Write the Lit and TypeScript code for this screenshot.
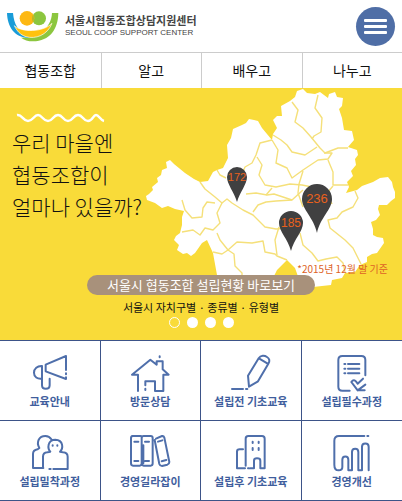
import { LitElement, html, svg, css } from "lit";
import { customElement, state } from "lit/decorators.js";

const NAV = ["협동조합", "알고", "배우고", "나누고"];

const OUTLINE =
  "M146 196L149 194L153 190L152 187L158 182L157 178L161 175L162 170L167 168L166 162L170 160L174 164L185 173L194 179L200 182L208 181L213 172L217 170L223 168L228 158L227 145L231 138L233 129L242 125L246 123L249 119L254 120L258 121L262 128L272 140L273 134L277 128L273 120L277 116L282 116L281 106L290 101L295 97L297 91L303 89L307 93L315 94L320 92L328 98L329 94L335 92L337 97L343 98L342 106L339 109L342 118L344 130L352 131L354 140L348 147L357 150L358 155L355 159L356 165L351 171L353 176L347 182L349 187L346 193L357 190L362 186L373 182L380 178L388 177L392 182L393 187L395 192L395 198L391 201L387 205L379 205L378 209L380 215L376 220L371 222L373 229L373 235L377 237L383 238L384 243L377 253L372 254L367 257L367 262L360 265L355 272L345 273L342 278L332 280L331 285L313 287L300 282L295 268L287 260L277 270L270 284L230 284L217 275L213 253L207 240L202 243L195 253L191 256L187 253L183 254L177 250L179 245L174 240L176 236L180 233L182 225L182 217L184 211L175 209L168 206L162 208L155 203L147 200Z";

const BOUNDARIES = [
  "M200 182L205 189L215 197L222 203L217 213L220 223L213 230L205 228L200 235L193 230L182 232",
  "M182 200L185 210L192 218L202 217L203 208L207 202L215 203",
  "M222 203L227 199L232 203L243 210L253 215L265 227L276 229L288 228",
  "M253 212L258 205L266 202L276 201L292 200L303 190",
  "M217 233L220 240L228 250L237 242L252 243L263 241L265 252L275 254L277 256L287 260",
  "M213 252L222 254L228 250L234 254L235 266L242 273L242 284",
  "M217 170L220 175L226 178",
  "M272 140L260 143L256 155L252 163L245 167L242 174",
  "M257 157L262 165L259 175L265 185L276 187L290 184L302 185L312 187",
  "M246 194L256 193L267 195L274 194L292 200",
  "M266 195L272 188",
  "M292 102L298 110L295 122L303 128L311 137L320 148L325 153L338 148L348 148",
  "M318 95L315 108L322 118L321 132L314 136L312 139",
  "M273 135L281 140L287 145L292 152L305 155L317 147",
  "M272 140L278 150L276 163L287 168L292 178L303 170L318 160L328 159L332 153L324 153",
  "M328 160L333 172L333 185L348 185",
  "M333 186L327 193L332 204",
  "M303 171L299 184L298 193L303 207",
  "M355 191L358 198L353 207L342 212L337 218L328 220L330 228L345 240L353 248L358 258L361 264",
  "M300 233L303 245L312 253L318 261L326 259L337 257L343 263L345 272",
  "M279 227L275 240L277 255",
];

interface Pin {
  x: number;
  y: number;
  r: number;
  tip: number;
  size: number;
  count: number;
}

const PINS: Pin[] = [
  { x: 237, y: 177, r: 10, tip: 202, size: 11, count: 172 },
  { x: 317, y: 199, r: 15, tip: 233, size: 13, count: 236 },
  { x: 291, y: 223, r: 12, tip: 251, size: 12, count: 185 },
];

const MENU = [
  {
    label: "교육안내",
    box: "90 48 120 108",
    art: svg`<path d="M137 80L198 54V96M137 80V100L198 123V118M126 84C112 83 102 92 102 104C102 117 112 124 126 122V84M126 122V142C126 156 149 156 149 142V122"/><path d="M198 106V109"/>`,
  },
  {
    label: "방문상담",
    box: "390 48 120 108",
    art: svg`<path d="M414 159V110H396L451 65L470 80V70H488V94L506 110H490V159H465V130H436V142M436 152V156M479 55V58"/>`,
  },
  {
    label: "설립전 기초교육",
    box: "93 48 120 108",
    art: svg`<path d="M96 153H129M138 153H142M144 113L176 61C182 51 194 52 201 57C209 62 210 69 205 77L174 130L147 146ZM178 62L203 77"/>`,
  },
  {
    label: "설립필수과정",
    box: "397 48 120 108",
    art: svg`<path d="M497 112V66Q497 54 485 54H428Q416 54 416 66V146Q416 158 428 158H450M434 78H437M445 78H479M434 92H437M445 92H479M434 106H437M445 106H479M455 132C462 122 468 128 474 137L490 122M455 132L474 157L497 140M474 157H495"/>`,
  },
  {
    label: "설립밀착과정",
    box: "90 48 120 108",
    art: svg`<path d="M130 150H99V108Q99 96 113 94L118 90C108 72 117 54 136 54Q148 54 154 64M160 153H203V116Q203 104 189 103L180 101C190 92 191 66 166 65C142 65 142 92 151 101L142 103Q129 104 129 116V150M148 153H152"/><path d="M158 82V83M172 82V83"/>`,
  },
  {
    label: "경영길라잡이",
    box: "390 48 120 108",
    art: svg`<path d="M396 54H423Q425 54 425 60V136Q425 143 419 143H399Q393 143 393 136V60Q393 54 399 54M425 60Q425 54 431 54H452Q458 54 458 60V136Q458 143 452 143H431Q425 143 425 136M468 62L486 54Q491 53 493 59L508 132Q508 138 502 140L486 144Q480 144 478 138L464 66M403 71H415M403 129H415M435 71H447M435 129H447M474 71L487 67M485 130L499 126M430 82V136"/>`,
  },
  {
    label: "설립후 기초교육",
    box: "93 48 120 108",
    art: svg`<path d="M135 151H111V101Q111 94 119 94H129M137 143V62Q137 54 145 54H186Q194 54 194 62V151H181V128Q181 121 171 121Q162 121 162 128V151H151M144 151H147M158 71V75M176 71V75M158 90V96M176 90V96"/>`,
  },
  {
    label: "경영개선",
    box: "397 48 120 108",
    art: svg`<path d="M494 54H418Q404 54 404 68V140Q404 157 417 157Q428 157 428 147V125C428 112 446 112 446 125V157H457V102C457 89 476 89 476 102V157H487V86C487 73 507 73 507 86V157M476 157H487M503 54H506"/>`,
  },
];

@customElement("app-root")
export class AppRoot extends LitElement {
  @state() private slide = 0;

  static styles = css`
    :host {
      display: block;
      background: #fff;
      color: #111;
      font-family: "Noto Sans CJK KR", "Noto Sans", sans-serif;
    }
    a {
      color: inherit;
      text-decoration: none;
    }
    button {
      padding: 0;
      border: 0;
      cursor: pointer;
    }
    .header {
      display: flex;
      justify-content: space-between;
      align-items: center;
      height: 52px;
      box-sizing: border-box;
      padding: 0 7px;
    }
    .brand {
      display: flex;
      align-items: center;
      gap: 6px;
    }
    .logo {
      width: 52px;
      height: 32px;
    }
    .names {
      display: flex;
      flex-direction: column;
    }
    .name {
      font-size: 11px;
      line-height: 14px;
      font-weight: 700;
      color: #444;
    }
    .latin {
      font-family: "Liberation Sans", Arial, sans-serif;
      font-size: 8px;
      line-height: 12px;
      color: #444;
    }
    .burger {
      display: flex;
      flex-direction: column;
      align-items: center;
      justify-content: center;
      gap: 3px;
      width: 39px;
      height: 39px;
      border-radius: 50%;
      background: #4f6ea6;
    }
    .bar {
      width: 23px;
      height: 3px;
      border-radius: 1px;
      background: #fff;
    }
    .nav {
      display: grid;
      grid-template-columns: repeat(4, 1fr);
      border-top: 1px solid #ccc;
    }
    .tab {
      font-size: 14px;
      line-height: 35px;
      text-align: center;
    }
    .tab + .tab {
      border-left: 1px solid #ccc;
    }
    .hero {
      position: relative;
      display: flex;
      flex-direction: column;
      align-items: center;
      min-height: 252px;
      box-sizing: border-box;
      padding: 24px 12px 12px;
      background: #f9db39;
    }
    .map {
      position: absolute;
      top: 0;
      right: 0;
      width: 260px;
      height: 252px;
    }
    .land {
      fill: #fff;
    }
    .boundary {
      fill: none;
      stroke: #f5e07a;
      stroke-width: 1.4;
      stroke-linejoin: round;
    }
    .pin {
      fill: #404041;
    }
    .count {
      fill: #e8601c;
      font-family: "Liberation Sans", Arial, sans-serif;
      text-anchor: middle;
    }
    .wave {
      align-self: flex-start;
      width: 96px;
      height: 12px;
      fill: none;
      stroke: #fff;
      stroke-width: 2.5;
    }
    .title {
      position: relative;
      align-self: flex-start;
      margin: 2px 0 0;
      font-size: 21px;
      line-height: 32px;
      font-weight: 300;
    }
    .note {
      position: relative;
      align-self: flex-end;
      margin: auto 2px 0 0;
      font-size: 10px;
      line-height: 12px;
      color: #dd6226;
    }
    .pill {
      position: relative;
      padding: 0 20px;
      border-radius: 10px;
      background: #a8917b;
      color: #fff;
      font-size: 13px;
      line-height: 20px;
    }
    .scope {
      margin: 4px 0 2px;
      font-size: 11px;
      line-height: 16px;
    }
    .dots {
      display: flex;
      gap: 7px;
    }
    .dot {
      width: 11px;
      height: 11px;
      box-sizing: border-box;
      border-radius: 50%;
      background: #fff;
    }
    .dot.current {
      border: 1px solid #fff;
      background: transparent;
    }
    .menu {
      display: grid;
      grid-template-columns: repeat(4, 1fr);
      border-bottom: 1px solid #3d5488;
    }
    .tile {
      display: flex;
      flex-direction: column;
      align-items: center;
      gap: 3px;
      height: 80px;
      box-sizing: border-box;
      padding-top: 13px;
      border-top: 1px solid #3d5488;
      border-right: 1px solid #3d5488;
      color: #3f5e9d;
      font-size: 11px;
      line-height: 16px;
      font-weight: 700;
      white-space: nowrap;
    }
    .tile:nth-child(4n) {
      border-right: 0;
    }
    .icon {
      width: 40px;
      height: 36px;
      overflow: visible;
      fill: none;
      stroke: #4f6fab;
      stroke-width: 6;
      stroke-linecap: round;
      stroke-linejoin: round;
    }
  `;

  private renderPin(p: Pin) {
    const { x, y, r, tip } = p;
    return svg`
      <path class="pin" d="M${x} ${tip}C${x - 3} ${tip - r} ${x - r} ${y + r * 0.7} ${x - r} ${y}A${r} ${r} 0 0 1 ${x + r} ${y}C${x + r} ${y + r * 0.7} ${x + 3} ${tip - r} ${x} ${tip}Z"></path>
      <text class="count" x=${x} y=${y + 4} font-size=${p.size}>${p.count}</text>`;
  }

  render() {
    return html`
      <header class="header">
        <a class="brand" href="#">
          <svg class="logo" viewBox="21 30 156 96" aria-hidden="true">
            <path fill="#8cc63f" d="M156 39H175C174 88 150 123 99 124C84 124 72 120 63 113C112 114 154 86 156 39Z" />
            <path fill="#1a9cd8" d="M21 39H39C42 72 54 96 88 113C45 115 22 81 21 39Z" />
            <path fill="#ffc20e" stroke="#fff" stroke-width="2" d="M43 77C64 97 128 98 156 70C142 106 106 118 78 110C60 104 51 93 43 77Z" />
            <circle cx="117" cy="55" r="21" fill="#8cc63f" />
            <circle cx="81" cy="55" r="22" fill="#fdb813" />
            <path fill="#b5b82a" d="M99 44Q105 55 99 67Q93 55 99 44Z" />
          </svg>
          <span class="names">
            <span class="name">서울시협동조합상담지원센터</span>
            <span class="latin">SEOUL COOP SUPPORT CENTER</span>
          </span>
        </a>
        <button class="burger" aria-label="메뉴">
          <span class="bar"></span><span class="bar"></span><span class="bar"></span>
        </button>
      </header>
      <nav class="nav">
        ${NAV.map((label) => html`<a class="tab" href="#">${label}</a>`)}
      </nav>
      <section class="hero">
        <svg class="map" viewBox="142 88 260 252" aria-hidden="true">
          <path class="land" d=${OUTLINE}></path>
          ${BOUNDARIES.map((d) => svg`<path class="boundary" d=${d}></path>`)}
          ${PINS.map((p) => this.renderPin(p))}
        </svg>
        <svg class="wave" viewBox="12 112 96 12" aria-hidden="true">
          <path d="M17 115C22 114 23 121 28 121S34 115 38 115S43 121 48 121S53 115 58 115S63 121 68 121S73 115 78 115S83 121 88 121S93 115 96 115S100 120 104 121" />
        </svg>
        <h1 class="title">우리 마을엔<br />협동조합이<br />얼마나 있을까?</h1>
        <p class="note">*2015년 12월 말 기준</p>
        <a class="pill" href="#">서울시 협동조합 설립현황 바로보기</a>
        <p class="scope">서울시 자치구별 · 종류별 · 유형별</p>
        <div class="dots">
          ${[0, 1, 2, 3].map(
            (i) => html`<button
              class="dot ${i === this.slide ? "current" : ""}"
              aria-label="${i + 1}"
              @click=${() => (this.slide = i)}
            ></button>`
          )}
        </div>
      </section>
      <nav class="menu">
        ${MENU.map(
          (m) => html`<a class="tile" href="#">
            <svg class="icon" viewBox=${m.box} aria-hidden="true">${m.art}</svg>
            <span>${m.label}</span>
          </a>`
        )}
      </nav>
    `;
  }
}
